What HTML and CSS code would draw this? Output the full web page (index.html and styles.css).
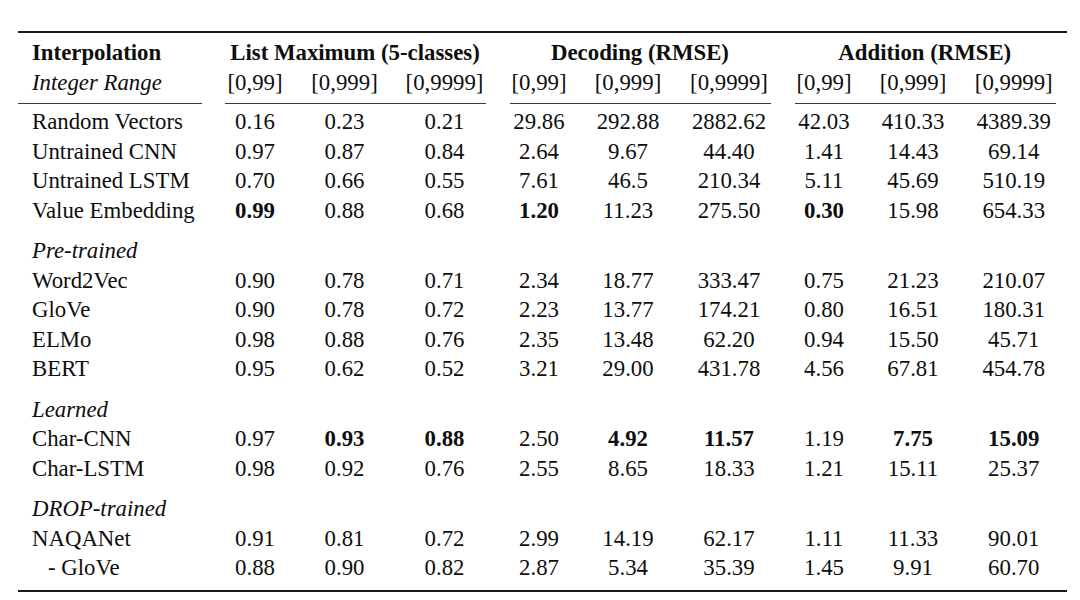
FILE: index.html
```html
<!DOCTYPE html>
<html lang="en">
<head>
<meta charset="utf-8">
<title>Numeracy probing results</title>
<link rel="stylesheet" href="styles.css">
</head>
<body>
<table class="results">
  <colgroup>
    <col class="c-label">
    <col class="c-lm1"><col class="c-lm2"><col class="c-lm3">
    <col class="c-dec1"><col class="c-dec2"><col class="c-dec3">
    <col class="c-add1"><col class="c-add2"><col class="c-add3">
  </colgroup>
  <thead>
    <tr class="head1">
      <th class="label">Interpolation</th>
      <th colspan="3" class="group">List Maximum (5-classes)</th>
      <th colspan="3" class="group">Decoding (RMSE)</th>
      <th colspan="3" class="group">Addition (RMSE)</th>
    </tr>
    <tr class="head2">
      <th class="label"><em>Integer Range</em></th>
      <th>[0,99]</th><th>[0,999]</th><th>[0,9999]</th>
      <th>[0,99]</th><th>[0,999]</th><th>[0,9999]</th>
      <th>[0,99]</th><th>[0,999]</th><th>[0,9999]</th>
    </tr>
    <tr class="cmid">
      <td><div class="rule rule-first"></div></td>
      <td colspan="3"><div class="rule"></div></td>
      <td colspan="3"><div class="rule"></div></td>
      <td colspan="3"><div class="rule"></div></td>
    </tr>
  </thead>
  <tbody>
    <tr><td class="label">Random Vectors</td><td>0.16</td><td>0.23</td><td>0.21</td><td>29.86</td><td>292.88</td><td>2882.62</td><td>42.03</td><td>410.33</td><td>4389.39</td></tr>
    <tr><td class="label">Untrained CNN</td><td>0.97</td><td>0.87</td><td>0.84</td><td>2.64</td><td>9.67</td><td>44.40</td><td>1.41</td><td>14.43</td><td>69.14</td></tr>
    <tr><td class="label">Untrained LSTM</td><td>0.70</td><td>0.66</td><td>0.55</td><td>7.61</td><td>46.5</td><td>210.34</td><td>5.11</td><td>45.69</td><td>510.19</td></tr>
    <tr><td class="label">Value Embedding</td><td><b>0.99</b></td><td>0.88</td><td>0.68</td><td><b>1.20</b></td><td>11.23</td><td>275.50</td><td><b>0.30</b></td><td>15.98</td><td>654.33</td></tr>

    <tr class="section"><td class="label" colspan="10"><em>Pre-trained</em></td></tr>
    <tr><td class="label">Word2Vec</td><td>0.90</td><td>0.78</td><td>0.71</td><td>2.34</td><td>18.77</td><td>333.47</td><td>0.75</td><td>21.23</td><td>210.07</td></tr>
    <tr><td class="label">GloVe</td><td>0.90</td><td>0.78</td><td>0.72</td><td>2.23</td><td>13.77</td><td>174.21</td><td>0.80</td><td>16.51</td><td>180.31</td></tr>
    <tr><td class="label">ELMo</td><td>0.98</td><td>0.88</td><td>0.76</td><td>2.35</td><td>13.48</td><td>62.20</td><td>0.94</td><td>15.50</td><td>45.71</td></tr>
    <tr><td class="label">BERT</td><td>0.95</td><td>0.62</td><td>0.52</td><td>3.21</td><td>29.00</td><td>431.78</td><td>4.56</td><td>67.81</td><td>454.78</td></tr>

    <tr class="section"><td class="label" colspan="10"><em>Learned</em></td></tr>
    <tr><td class="label">Char-CNN</td><td>0.97</td><td><b>0.93</b></td><td><b>0.88</b></td><td>2.50</td><td><b>4.92</b></td><td><b>11.57</b></td><td>1.19</td><td><b>7.75</b></td><td><b>15.09</b></td></tr>
    <tr><td class="label">Char-LSTM</td><td>0.98</td><td>0.92</td><td>0.76</td><td>2.55</td><td>8.65</td><td>18.33</td><td>1.21</td><td>15.11</td><td>25.37</td></tr>

    <tr class="section"><td class="label" colspan="10"><em>DROP-trained</em></td></tr>
    <tr><td class="label">NAQANet</td><td>0.91</td><td>0.81</td><td>0.72</td><td>2.99</td><td>14.19</td><td>62.17</td><td>1.11</td><td>11.33</td><td>90.01</td></tr>
    <tr class="last"><td class="label"><span class="sub">- GloVe</span></td><td>0.88</td><td>0.90</td><td>0.82</td><td>2.87</td><td>5.34</td><td>35.39</td><td>1.45</td><td>9.91</td><td>60.70</td></tr>
  </tbody>
</table>
</body>
</html>
```
FILE: styles.css
```css
html, body {
  margin: 0;
  padding: 0;
  background: #ffffff;
}

body {
  color: #0e0e0e;
  font-family: "Liberation Serif", "Times New Roman", serif;
  font-size: 22.8px;
}

.results {
  margin: 31px 0 0 18px;
  width: 1049px;
  table-layout: fixed;
  border-collapse: separate;
  border-spacing: 0;
  border-top: 2px solid #1a1a1a;
  border-bottom: 2px solid #1a1a1a;
}

.c-label { width: 194.5px; }
.c-lm1 { width: 85px; }
.c-lm2 { width: 94px; }
.c-lm3 { width: 106px; }
.c-dec1 { width: 83px; }
.c-dec2 { width: 95px; }
.c-dec3 { width: 107px; }
.c-add1 { width: 83px; }
.c-add2 { width: 95px; }
.c-add3 { width: 106.5px; }

.results th,
.results td {
  padding: 0;
  line-height: 29.5px;
  text-align: center;
  white-space: nowrap;
  font-weight: normal;
  vertical-align: baseline;
}

.results .label {
  text-align: left;
  text-indent: 14px;
}

.results em {
  font-style: italic;
}

.results b,
.head1 th {
  font-weight: bold;
}

.head1 th {
  padding-top: 4.5px;
}

.head2 th {
  padding-top: 0.5px;
}

.cmid td {
  line-height: 0;
  font-size: 0;
  padding: 5.8px 0 3.6px;
}

.rule {
  height: 1px;
  background: #3a3a3a;
  margin: 0 11.5px 0 12.5px;
}

.rule-first {
  margin: 0 10.5px 0 0;
}

.section td {
  padding-top: 11px;
}

.last td {
  padding-bottom: 7px;
}

.sub {
  padding-left: 16px;
}
```
